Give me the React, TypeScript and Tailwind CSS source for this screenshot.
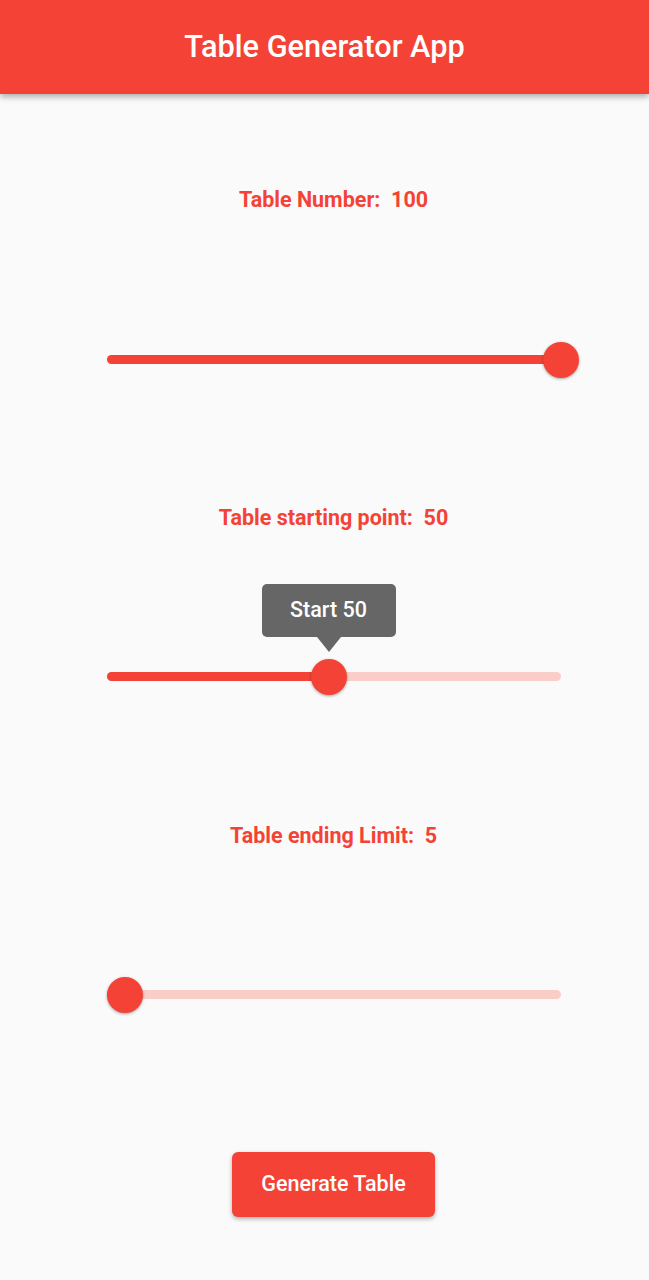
import React from "react";

function Slider({ pos, withTooltip }: { pos: number; withTooltip?: string }) {
  return (
    <div className="relative h-[36px] w-[454px]">
      <div className="absolute left-0 right-0 top-[13px] h-[9px] rounded-full bg-[#FACDC9]" />
      <div
        className="absolute left-0 top-[13px] h-[9px] rounded-full bg-[#F44336]"
        style={{ width: pos }}
      />
      <div
        className="absolute top-0 h-[36px] w-[36px] rounded-full bg-[#F44336] shadow-[0_1px_3px_rgba(0,0,0,0.35)]"
        style={{ left: pos - 18 }}
      />
      {withTooltip && (
        <div
          className="absolute bottom-[43px] flex flex-col items-center"
          style={{ left: pos - 67 }}
        >
          <div className="flex h-[53px] w-[134px] items-center justify-center rounded-[5px] bg-[#666666] text-[21.5px] font-medium text-white">
            {withTooltip}
          </div>
          <div className="h-0 w-0 border-l-[12px] border-r-[12px] border-t-[15px] border-l-transparent border-r-transparent border-t-[#666666]" />
        </div>
      )}
    </div>
  );
}

export default function App() {
  return (
    <div
      className="min-h-[1280px] w-full bg-[#FAFAFA]"
      style={{ fontFamily: "Roboto, 'Noto Sans', sans-serif" }}
    >
      <header className="relative z-10 flex h-[94px] items-center justify-center bg-[#F44336] shadow-[0_3px_6px_rgba(0,0,0,0.3)]">
        <h1 className="text-[30.7px] font-medium text-white">Table Generator App</h1>
      </header>
      <main className="flex flex-col items-center pl-[18px]">
        <div className="mt-[92px] h-[28px] whitespace-pre text-[21.5px] font-bold leading-[28px] text-[#F44336]">
          {"Table Number:  100"}
        </div>
        <div className="mt-[128px]">
          <Slider pos={454} />
        </div>
        <div className="mt-[126px] h-[28px] whitespace-pre text-[21.5px] font-bold leading-[28px] text-[#F44336]">
          {"Table starting point:  50"}
        </div>
        <div className="mt-[127px]">
          <Slider pos={222} withTooltip="Start 50" />
        </div>
        <div className="mt-[127px] h-[28px] whitespace-pre text-[21.5px] font-bold leading-[28px] text-[#F44336]">
          {"Table ending Limit:  5"}
        </div>
        <div className="mt-[127px]">
          <Slider pos={18} />
        </div>
        <button className="mt-[139px] h-[65px] w-[203px] rounded-[6px] bg-[#F44336] text-[21.5px] font-medium text-white shadow-[0_2px_4px_rgba(0,0,0,0.3)]">
          Generate Table
        </button>
      </main>
    </div>
  );
}
